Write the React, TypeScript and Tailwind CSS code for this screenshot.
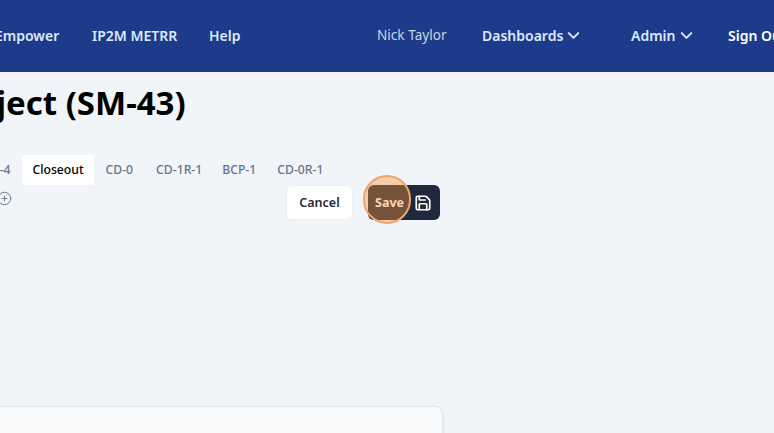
import { ChevronDown, CirclePlus, Save } from 'lucide-react';

const font = "font-['Noto_Sans',sans-serif]";

export default function App() {
  return (
    <div className={`h-[433px] w-[774px] overflow-hidden bg-[#f1f5f9] ${font}`}>
      {/* Top nav, scrolled to the right so it clips on both sides */}
      <nav className="flex h-[72px] items-center whitespace-nowrap bg-[#1e3a8a] pb-[2px] text-[14px] font-semibold text-[#dbeafe]">
        <a className="-ml-[5px] w-[97px] shrink-0">Empower</a>
        <a className="w-[117px] shrink-0">IP2M METRR</a>
        <a className="w-[168px] shrink-0">Help</a>
        <span className="w-[105px] shrink-0 pt-[1px] text-[13.6px] font-normal text-[#cbd5e1]">Nick Taylor</span>
        <a className="flex w-[149px] shrink-0 items-center gap-[1px]">
          Dashboards <ChevronDown size={19} strokeWidth={2.5} />
        </a>
        <a className="flex w-[97px] shrink-0 items-center gap-[1px]">
          Admin <ChevronDown size={19} strokeWidth={2.5} />
        </a>
        <a className="shrink-0 text-white">Sign Out</a>
      </nav>

      <h1 className="-ml-[59px] mt-[11px] whitespace-nowrap text-[33px] font-bold leading-[40px] text-black">
        Project (SM-43)
      </h1>

      {/* Tabs + actions */}
      <div className="mt-[32px] flex w-[440px] items-start justify-between">
        <div className="min-w-0 flex-1">
          <div className="-ml-[28px] flex h-[30px] items-center whitespace-nowrap text-[12.2px] font-medium text-[#64748b]">
            <span className="shrink-0 px-[11px]">CD-4</span>
            <span className="flex h-[30px] w-[72px] shrink-0 items-center justify-center rounded-[2px] bg-white pl-[1px] text-black">
              Closeout
            </span>
            <span className="shrink-0 px-[12px]">CD-0</span>
            <span className="shrink-0 pl-[11px] pr-[9px]">CD-1R-1</span>
            <span className="shrink-0 pl-[11px] pr-[10px]">BCP-1</span>
            <span className="shrink-0 px-[11px]">CD-0R-1</span>
          </div>
          <CirclePlus size={15} strokeWidth={1.5} className="-ml-[3px] mt-[6px] text-[#64748b]" />
        </div>
        <div className="mt-[30px] flex shrink-0 items-center gap-[15px]">
          <button className="flex h-[35px] w-[67px] items-center justify-center rounded-md border border-[#eaeff5] bg-white pt-[1px] text-[12.5px] font-semibold text-[#1e293b]">
            Cancel
          </button>
          <div className="relative">
            <button className="flex h-[35px] w-[72px] items-center justify-between rounded-md bg-[#1e293b] pl-[7px] pr-[8px] text-[12.5px] font-bold text-white">
              <span className="pt-[1px]">Save</span> <Save size={18} strokeWidth={2.25} />
            </button>
            <div className="absolute -left-[5px] -top-[10px] h-[49px] w-[48px] rounded-full border-[2.5px] border-[#f0a468] bg-[#fb923c]/40" />
          </div>
        </div>
      </div>

      {/* Card below the fold */}
      <div className="-ml-[10px] mt-[186px] h-[60px] w-[453px] rounded-lg border border-[#e2e8f0] bg-[#f8fafc] shadow-sm" />
    </div>
  );
}
